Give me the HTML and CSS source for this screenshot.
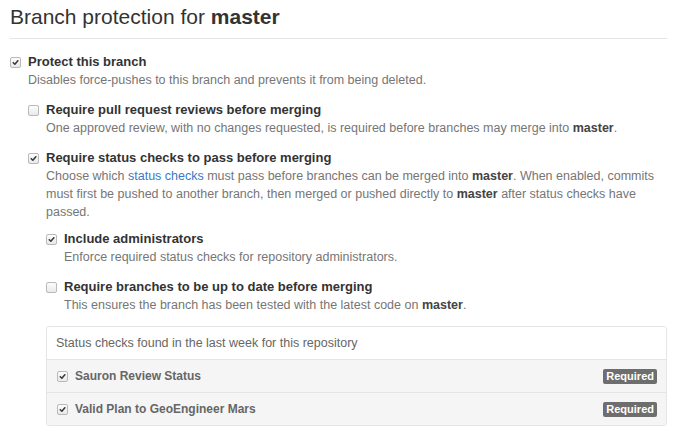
FILE: index.html
```html
<!DOCTYPE html>
<html>
<head>
<meta charset="utf-8">
<link rel="stylesheet" href="styles.css">
</head>
<body>
<div class="page">
  <h2 class="subhead">Branch protection for <strong>master</strong></h2>

  <div class="check-item">
    <span class="cb checked"><svg viewBox="0 0 10 10"><path d="M2.5 5.2 L4.3 7 L7.6 3" /></svg></span>
    <div class="check-body">
      <div class="label">Protect this branch</div>
      <p class="note">Disables force-pushes to this branch and prevents it from being deleted.</p>

      <div class="check-item">
        <span class="cb"></span>
        <div class="check-body">
          <div class="label">Require pull request reviews before merging</div>
          <p class="note">One approved review, with no changes requested, is required before branches may merge into <strong>master</strong>.</p>
        </div>
      </div>

      <div class="check-item">
        <span class="cb checked"><svg viewBox="0 0 10 10"><path d="M2.5 5.2 L4.3 7 L7.6 3" /></svg></span>
        <div class="check-body">
          <div class="label">Require status checks to pass before merging</div>
          <p class="note">Choose which <a href="#">status checks</a> must pass before branches can be merged into <strong>master</strong>. When enabled, commits must first be pushed to another branch, then merged or pushed directly to <strong>master</strong> after status checks have passed.</p>

          <div class="nested">
            <div class="check-item">
              <span class="cb checked"><svg viewBox="0 0 10 10"><path d="M2.5 5.2 L4.3 7 L7.6 3" /></svg></span>
              <div class="check-body">
                <div class="label">Include administrators</div>
                <p class="note">Enforce required status checks for repository administrators.</p>
              </div>
            </div>
            <div class="check-item">
              <span class="cb"></span>
              <div class="check-body">
                <div class="label">Require branches to be up to date before merging</div>
                <p class="note">This ensures the branch has been tested with the latest code on <strong>master</strong>.</p>
              </div>
            </div>
          </div>
        </div>
      </div>
    </div>
  </div>

  <div class="box">
    <div class="box-header">Status checks found in the last week for this repository</div>
    <div class="box-row">
      <span class="cb checked"><svg viewBox="0 0 10 10"><path d="M2.5 5.2 L4.3 7 L7.6 3" /></svg></span>
      <span class="row-label">Sauron Review Status</span>
      <span class="badge">Required</span>
    </div>
    <div class="box-row">
      <span class="cb checked"><svg viewBox="0 0 10 10"><path d="M2.5 5.2 L4.3 7 L7.6 3" /></svg></span>
      <span class="row-label">Valid Plan to GeoEngineer Mars</span>
      <span class="badge">Required</span>
    </div>
  </div>
</div>
</body>
</html>
```
FILE: styles.css
```css
html, body {
  margin: 0;
  padding: 0;
  background: #fff;
}
body {
  font-family: "Liberation Sans", Arial, sans-serif;
  color: #333;
  font-size: 13px;
}
.page {
  padding: 4px 19px 0 10px;
}
.subhead {
  margin: 0;
  font-size: 21px;
  font-weight: 400;
  line-height: 26px;
  padding-bottom: 8px;
  border-bottom: 1px solid #e5e5e5;
  color: #333;
}
.subhead strong {
  font-weight: 700;
}
.page > .check-item {
  margin-top: 14px;
}
.check-item {
  display: flex;
  align-items: flex-start;
  margin-top: 12px;
}
.nested > .check-item:first-child {
  margin-top: 9px;
}
.cb {
  flex: none;
  width: 9px;
  height: 9px;
  margin-top: 4px;
  margin-right: 7px;
  border: 1px solid #b9b9b9;
  border-radius: 2px;
  background: linear-gradient(#fdfdfd, #e9e9e9);
  display: flex;
  align-items: center;
  justify-content: center;
}
.cb svg {
  width: 9px;
  height: 9px;
}
.cb svg path {
  fill: none;
  stroke: #3a3a3a;
  stroke-width: 1.7;
  stroke-linecap: round;
  stroke-linejoin: round;
}
.check-body {
  flex: 1;
  min-width: 0;
}
.label {
  font-weight: 700;
  font-size: 13px;
  line-height: 18px;
  color: #333;
}
.note {
  margin: 0;
  font-size: 12.5px;
  line-height: 18px;
  color: #767676;
}
.note strong {
  color: #444;
  font-weight: 700;
}
.note a {
  color: #4078c0;
  text-decoration: none;
}
.box {
  margin: 12px 0 0 36px;
  border: 1px solid #e5e5e5;
  border-radius: 3px;
  overflow: hidden;
}
.box-header {
  padding: 8px 9px 8px;
  line-height: 16px;
  font-size: 12.5px;
  color: #666;
  background: #fff;
}
.box-row {
  display: flex;
  align-items: center;
  padding: 8px 9px 7px 10px;
  line-height: 17px;
  background: #f5f5f5;
  border-top: 1px solid #e5e5e5;
}
.box-row .cb {
  margin-top: 0;
  margin-right: 7px;
}
.row-label {
  flex: 1;
  font-size: 12px;
  font-weight: 700;
  color: #666;
}
.badge {
  background: #6e6e6e;
  color: #fff;
  font-size: 11px;
  font-weight: 700;
  line-height: 15px;
  padding: 0 3px;
  border-radius: 2px;
}
```
